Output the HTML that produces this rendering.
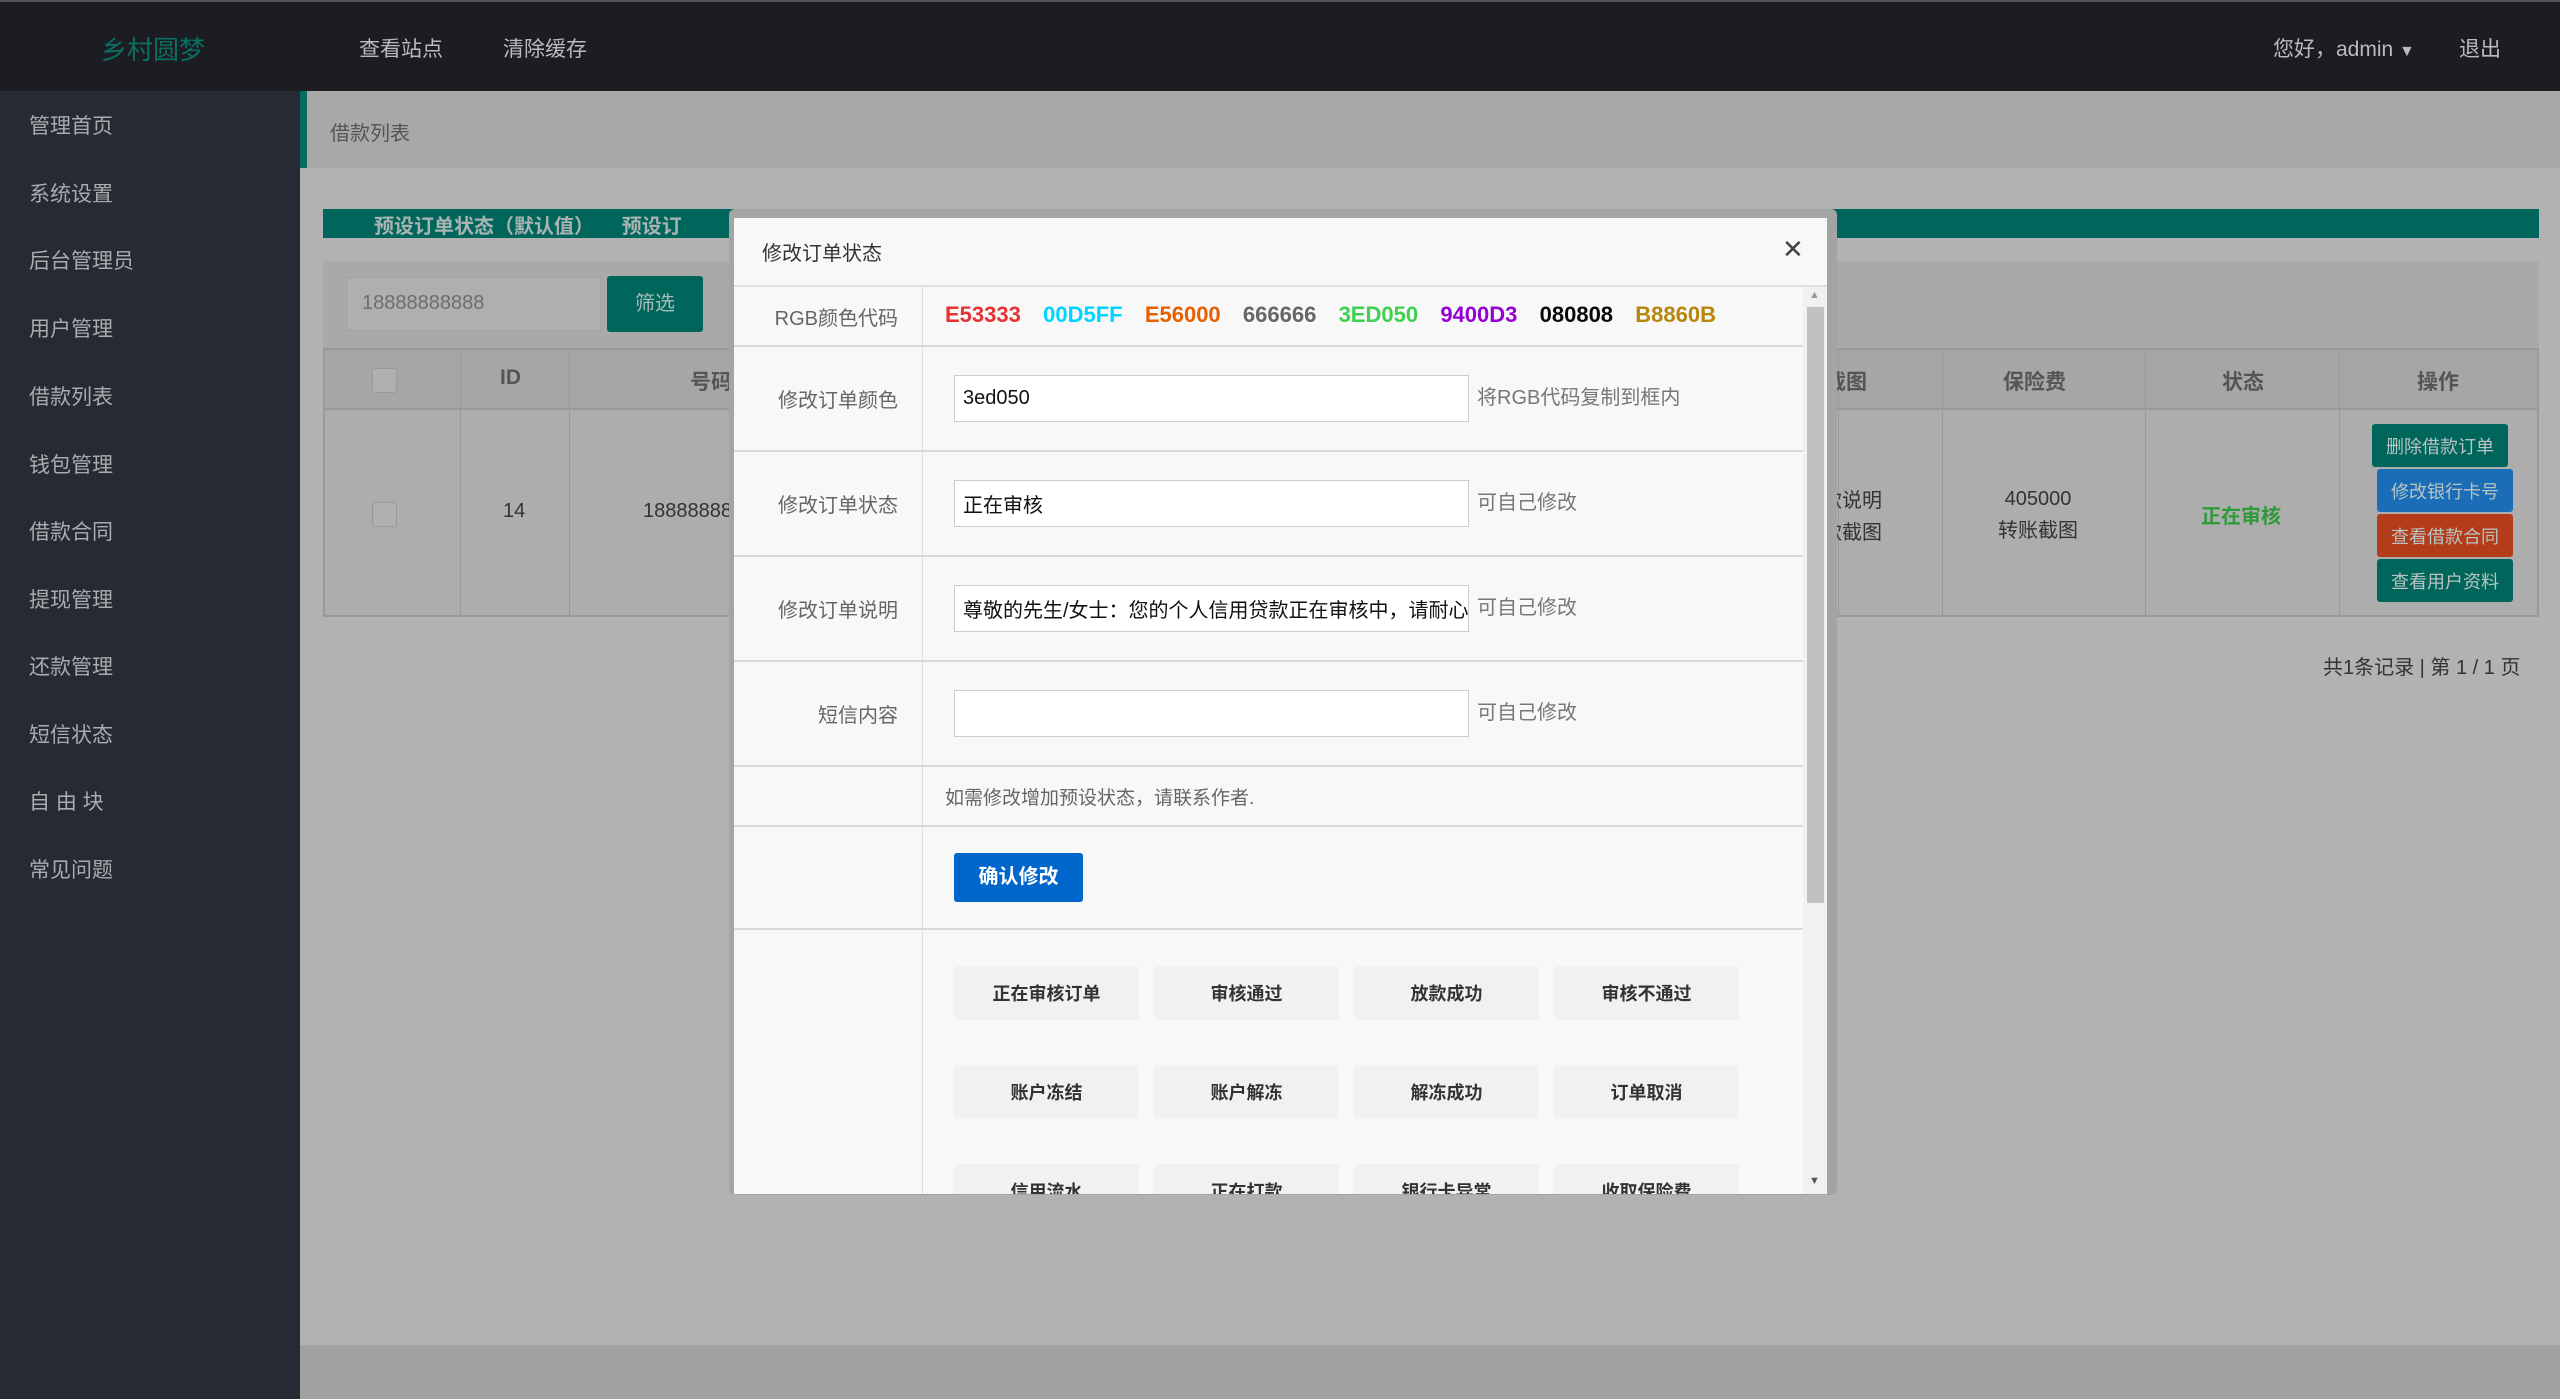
<!DOCTYPE html>
<html><head><meta charset="utf-8"><style>
*{margin:0;padding:0;box-sizing:border-box}
body{width:2560px;height:1399px;overflow:hidden;position:relative;background:#b2b2b2;font-family:"Liberation Sans","Noto Sans CJK SC",sans-serif;}
.a{position:absolute}
.hdr{left:0;top:0;width:2560px;height:91px;background:#1b1d22;border-top:2px solid #555}
.side{left:0;top:91px;width:300px;height:1308px;background:#272a33}
.side div{position:absolute;left:29px;font-size:21px;color:#a9abae}
.t{white-space:nowrap}
.cell{position:absolute;border-right:1px solid #999;top:0;height:100%}
.mrow{position:absolute;left:0;width:1069px;border-bottom:2px solid #d8d8d8}
.lbl{position:absolute;left:0;width:189px;height:100%;border-right:1px solid #ddd;text-align:right;padding-right:24px;font-size:20px;color:#666;display:flex;align-items:center;justify-content:flex-end}
.inp{position:absolute;left:220px;width:515px;height:47px;background:#fff;border:1px solid #ccc;font-size:20px;color:#111;padding-left:8px;display:flex;align-items:center;overflow:hidden;white-space:nowrap}
.hint{position:absolute;left:743px;font-size:20px;color:#777}
.qb{position:absolute;width:185px;height:54px;background:#f1f1f1;border-radius:4px;font-size:18px;font-weight:bold;color:#333;display:flex;align-items:center;justify-content:center}
.ob{position:absolute;height:43px;border-radius:3px;color:#b8c4c2;font-size:18px;display:flex;align-items:center;justify-content:center;width:136px}
</style></head><body>
<div class="a hdr">
 <div class="a t" style="left:101px;top:28px;font-size:26px;color:#0b6e63">乡村圆梦</div>
 <div class="a t" style="left:359px;top:31px;font-size:21px;color:#b9bbbd">查看站点</div>
 <div class="a t" style="left:503px;top:31px;font-size:21px;color:#b9bbbd">清除缓存</div>
 <div class="a t" style="left:2273px;top:31px;font-size:21px;color:#b9bbbd">您好，admin <span style="font-size:16px">▼</span></div>
 <div class="a t" style="left:2459px;top:31px;font-size:21px;color:#b9bbbd">退出</div>
</div>
<div class="a side">
 <div style="top:19px">管理首页</div><div style="top:87px">系统设置</div><div style="top:154px">后台管理员</div><div style="top:222px">用户管理</div><div style="top:290px">借款列表</div><div style="top:358px">钱包管理</div><div style="top:425px">借款合同</div><div style="top:493px">提现管理</div><div style="top:560px">还款管理</div><div style="top:628px">短信状态</div><div style="top:695px">自 由 块</div><div style="top:763px">常见问题</div>
</div>
<div class="a" style="left:300px;top:91px;width:2260px;height:77px;background:#a8a8a8;border-left:7px solid #066b60"></div>
<div class="a t" style="left:330px;top:117px;font-size:20px;color:#555">借款列表</div>
<div class="a" style="left:323px;top:209px;width:2216px;height:29px;background:#00665b"></div>
<div class="a t" style="left:374px;top:210px;font-size:20px;font-weight:bold;color:#a9b3b1">预设订单状态（默认值）&nbsp;&nbsp;&nbsp;&nbsp;&nbsp;预设订</div>
<div class="a" style="left:323px;top:261px;width:2216px;height:87px;background:#a9a9a9"></div>
<div class="a t" style="left:346px;top:277px;width:255px;height:54px;background:#afafaf;border:1px solid #a3a3a3;font-size:20px;color:#6e6e6e;padding:14px 15px">18888888888</div>
<div class="a" style="left:607px;top:276px;width:96px;height:56px;background:#00665b;border-radius:3px;color:#a9bdb9;font-size:20px;text-align:center;line-height:56px">筛选</div>
<div class="a" style="left:323px;top:348px;width:2216px;height:269px;background:#adadad;border:2px solid #999">
 <div class="a" style="left:0;top:0;width:100%;height:60px;background:#a6a6a6;border-bottom:2px solid #999"></div>
 <div class="cell" style="left:135px"></div><div class="cell" style="left:244px"></div>
 <div class="cell" style="left:1513px"></div><div class="cell" style="left:1617px"></div><div class="cell" style="left:1820px"></div><div class="cell" style="left:2014px"></div>
 <div class="a" style="left:47px;top:18px;width:25px;height:25px;background:#b0b0b0;border:1px solid #999;border-radius:3px"></div>
 <div class="a" style="left:47px;top:152px;width:25px;height:25px;background:#b0b0b0;border:1px solid #999;border-radius:3px"></div>
 <div class="a t" style="left:175px;top:16px;font-size:21px;font-weight:bold;color:#555">ID</div>
 <div class="a t" style="left:365px;top:16px;font-size:21px;font-weight:bold;color:#555">号码</div>
 <div class="a t" style="left:178px;top:150px;font-size:20px;color:#333">14</div>
 <div class="a t" style="left:318px;top:150px;font-size:20px;color:#333">18888888888</div>
 <div class="a t" style="left:1500px;top:16px;font-size:21px;font-weight:bold;color:#555">截图</div>
 <div class="a t" style="left:1497px;top:135px;font-size:20px;color:#333;line-height:32px">款说明<br>款截图</div>
 <div class="a t" style="left:1678px;top:16px;font-size:21px;font-weight:bold;color:#555">保险费</div>
 <div class="a t" style="left:1673px;top:133px;font-size:20px;color:#333;line-height:32px;text-align:center">405000<br>转账截图</div>
 <div class="a t" style="left:1897px;top:16px;font-size:21px;font-weight:bold;color:#555">状态</div>
 <div class="a t" style="left:1876px;top:150px;font-size:20px;font-weight:bold;color:#2f9a3a">正在审核</div>
 <div class="a t" style="left:2092px;top:16px;font-size:21px;font-weight:bold;color:#555">操作</div>
 <div class="ob" style="left:2047px;top:74px;background:#00665b">删除借款订单</div>
 <div class="ob" style="left:2052px;top:119px;background:#1a6db6">修改银行卡号</div>
 <div class="ob" style="left:2052px;top:164px;background:#b33c1b">查看借款合同</div>
 <div class="ob" style="left:2052px;top:209px;background:#00665b">查看用户资料</div>
</div>
<div class="a t" style="left:2323px;top:651px;font-size:20px;color:#333">共1条记录 | 第 1 / 1 页</div>
<div class="a" style="left:300px;top:1345px;width:2260px;height:54px;background:#a2a2a2"></div>

<div class="a" style="left:729px;top:209px;width:1108px;height:986px;background:#a4a4a4;border-radius:6px"></div>
<div class="a" style="left:734px;top:218px;width:1093px;height:976px;background:#f8f8f8;overflow:hidden">
 <div class="a t" style="left:28px;top:19px;font-size:20px;color:#333">修改订单状态</div>
 <div class="a t" style="left:1048px;top:16px;font-size:26px;color:#444">✕</div>
 <div class="a" style="left:0;top:67px;width:1093px;height:2px;background:#e0e0e0"></div>
 <div class="a" style="left:0;top:69px;width:1069px;height:920px">
  <div class="mrow" style="top:0;height:60px"><div class="lbl">RGB颜色代码</div>
   <div class="a t" style="left:211px;top:15px;font-size:22px;font-weight:bold;word-spacing:5px"><span style="color:#e53333">E53333</span>&nbsp; <span style="color:#00d5ff">00D5FF</span>&nbsp; <span style="color:#e56000">E56000</span>&nbsp; <span style="color:#666">666666</span>&nbsp; <span style="color:#3ed050">3ED050</span>&nbsp; <span style="color:#9400d3">9400D3</span>&nbsp; <span style="color:#080808">080808</span>&nbsp; <span style="color:#b8860b">B8860B</span></div></div>
  <div class="mrow" style="top:60px;height:105px"><div class="lbl">修改订单颜色</div><div class="inp" style="top:28px">3ed050</div><div class="hint t" style="top:34px">将RGB代码复制到框内</div></div>
  <div class="mrow" style="top:165px;height:105px"><div class="lbl">修改订单状态</div><div class="inp" style="top:28px">正在审核</div><div class="hint t" style="top:34px">可自己修改</div></div>
  <div class="mrow" style="top:270px;height:105px"><div class="lbl">修改订单说明</div><div class="inp" style="top:28px">尊敬的先生/女士：您的个人信用贷款正在审核中，请耐心等待</div><div class="hint t" style="top:34px">可自己修改</div></div>
  <div class="mrow" style="top:375px;height:105px"><div class="lbl">短信内容</div><div class="inp" style="top:28px"></div><div class="hint t" style="top:34px">可自己修改</div></div>
  <div class="mrow" style="top:480px;height:60px"><div class="lbl"></div><div class="a t" style="left:211px;top:16px;font-size:19px;color:#666">如需修改增加预设状态，请联系作者.</div></div>
  <div class="mrow" style="top:540px;height:103px"><div class="lbl"></div><div class="a" style="left:220px;top:26px;width:129px;height:49px;background:#0066cc;border-radius:3px;color:#fff;font-size:20px;font-weight:bold;text-align:center;line-height:49px">确认修改</div></div>
  <div class="mrow" style="top:643px;height:300px;border:0"><div class="lbl"></div>
   <div class="qb" style="left:220px;top:36px">正在审核订单</div><div class="qb" style="left:420px;top:36px">审核通过</div><div class="qb" style="left:620px;top:36px">放款成功</div><div class="qb" style="left:820px;top:36px">审核不通过</div>
   <div class="qb" style="left:220px;top:135px">账户冻结</div><div class="qb" style="left:420px;top:135px">账户解冻</div><div class="qb" style="left:620px;top:135px">解冻成功</div><div class="qb" style="left:820px;top:135px">订单取消</div>
   <div class="qb" style="left:220px;top:234px">信用流水</div><div class="qb" style="left:420px;top:234px">正在打款</div><div class="qb" style="left:620px;top:234px">银行卡异常</div><div class="qb" style="left:820px;top:234px">收取保险费</div>
  </div>
 </div>
 <div class="a" style="left:1069px;top:69px;width:24px;height:907px;background:#f1f1f1">
  <div class="a" style="left:4px;top:20px;width:17px;height:596px;background:#c1c1c1"></div>
  <div class="a" style="left:6px;top:2px;font-size:11px;color:#999">▲</div>
  <div class="a" style="left:6px;top:888px;font-size:11px;color:#555">▼</div>
 </div>
</div>
</body></html>
